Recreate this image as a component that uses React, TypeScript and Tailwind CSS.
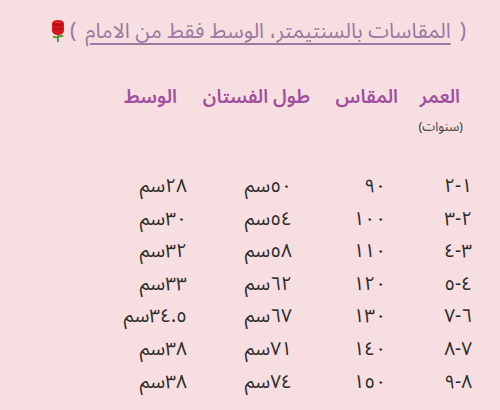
import React from 'react';

const rows = [
  { age: '١-٢', size: '٩٠', len: '٥٠سم', waist: '٢٨سم' },
  { age: '٢-٣', size: '١٠٠', len: '٥٤سم', waist: '٣٠سم' },
  { age: '٣-٤', size: '١١٠', len: '٥٨سم', waist: '٣٢سم' },
  { age: '٤-٥', size: '١٢٠', len: '٦٢سم', waist: '٣٣سم' },
  { age: '٦-٧', size: '١٣٠', len: '٦٧سم', waist: '٣٤.٥سم' },
  { age: '٧-٨', size: '١٤٠', len: '٧١سم', waist: '٣٨سم' },
  { age: '٨-٩', size: '١٥٠', len: '٧٤سم', waist: '٣٨سم' },
];

const Rose = () => (
  <svg width="18" height="24" viewBox="0 0 18 24">
    <path d="M9 15 L9 23" stroke="#3f8a2c" strokeWidth="1.6" />
    <path d="M9 18 Q5 16 3 18 Q6 20 9 19 Z" fill="#4a9a30" />
    <path d="M9 17 Q13 15 15 17 Q12 19 9 18 Z" fill="#4a9a30" />
    <path d="M3 5 Q3 1 9 1 Q15 1 15 5 L15 11 Q15 16 9 16 Q3 16 3 11 Z" fill="#d8161b" />
    <path d="M4 5 Q9 2 14 5 Q12 8 9 7 Q6 8 4 5 Z" fill="#b50d12" />
    <path d="M5 9 Q9 12 13 9" stroke="#a10a0e" strokeWidth="1" fill="none" />
    <path d="M6 3 Q9 5 12 3" stroke="#f04a40" strokeWidth="0.8" fill="none" />
  </svg>
);

const App: React.FC = () => {
  return (
    <div
      dir="rtl"
      className="w-[500px] h-[410px] bg-[#f6dee1] overflow-hidden"
      style={{ fontFamily: '"Noto Sans Arabic", "Noto Sans", "DejaVu Sans", sans-serif' }}
    >
      {/* Title */}
      <div className="flex items-center pt-[13px] pr-[34px] gap-[3px] text-[#9a7aa0] text-[21px] leading-[36px]">
        <span>(</span>
        <span className="underline decoration-[1.5px] underline-offset-[5px] px-[6px]">
          المقاسات بالسنتيمتر، الوسط فقط من الامام
        </span>
        <span>)</span>
        <Rose />
      </div>

      {/* Header */}
      <div className="grid grid-cols-[62px_88px_133px_1fr] pr-[40px] mt-[34px] text-[#a0509e] text-[19px] font-semibold leading-[28px]">
        <span>العمر</span>
        <span>المقاس</span>
        <span>طول الفستان</span>
        <span>الوسط</span>
      </div>
      <div className="pr-[37px] mt-[8px] text-[13px] text-[#444] leading-[16px]">(سنوات)</div>

      {/* Rows */}
      <div className="mt-[35px] pr-[28px] flex flex-col text-[#2c2c2c] text-[19px] leading-[32.6px]">
        {rows.map((r, i) => (
          <div key={i} className="grid grid-cols-[86px_94px_105px_1fr]">
            <span>{r.age}</span>
            <span>{r.size}</span>
            <span>{r.len}</span>
            <span>{r.waist}</span>
          </div>
        ))}
      </div>
    </div>
  );
};

export default App;
